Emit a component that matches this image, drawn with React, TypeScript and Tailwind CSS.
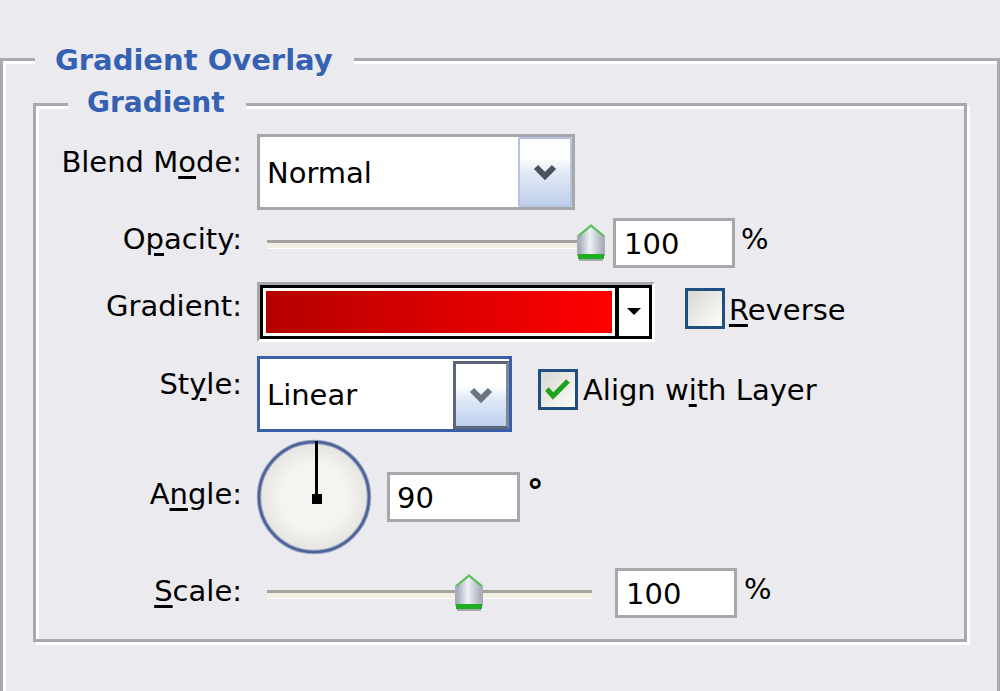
import clsx from "clsx";
import type { ReactNode } from "react";

function Label({ className, children }: { className?: string; children: ReactNode }) {
  return <div className={clsx("w-[206px] shrink-0 text-right", className)}>{children}</div>;
}

function Mn({ children }: { children: ReactNode }) {
  return <span className="underline decoration-[3px] underline-offset-[4px]">{children}</span>;
}

function Chevron({ color }: { color: string }) {
  return (
    <svg width="24" height="16" viewBox="0 0 24 16">
      <path d="M3 3 L12 12 L21 3" fill="none" stroke={color} strokeWidth="6" strokeLinejoin="miter" />
    </svg>
  );
}

function Thumb({ id }: { id: string }) {
  return (
    <svg width="30" height="38" viewBox="0 0 30 38">
      <defs>
        <linearGradient id={id} x1="0" x2="1" y1="0" y2="0">
          <stop offset="0" stopColor="#9ca2b2" />
          <stop offset="0.45" stopColor="#f0f1f6" />
          <stop offset="1" stopColor="#a3a8b7" />
        </linearGradient>
      </defs>
      <path d="M2 12 L15 1.5 L28 12 V31 H2 Z" fill={`url(#${id})`} stroke="#a8adb9" strokeWidth="2" />
      <path d="M2.5 12 L15 1.5 L27.5 12" fill="none" stroke="#55c455" strokeWidth="2" />
      <rect x="2" y="30" width="26" height="5" fill="#1fae1f" />
      <rect x="3" y="35" width="24" height="2" fill="#a4a9b0" />
    </svg>
  );
}

function Slider({ width, thumbLeft, id }: { width: string; thumbLeft: number; id: string }) {
  return (
    <div className={clsx("relative h-[38px] shrink-0", width)}>
      <div className="absolute left-[10px] top-[16px] w-[325px]">
        <div className="h-[3px] bg-[#a3a29d]" />
        <div className="h-[5px] bg-[#f1efe3]" />
        <div className="h-[1px] bg-white" />
      </div>
      <div className="absolute top-0" style={{ left: thumbLeft }}>
        <Thumb id={id} />
      </div>
    </div>
  );
}

function NumBox({ value, className }: { value: string; className?: string }) {
  return (
    <div className={clsx("flex h-[50px] shrink-0 items-center border-[3px] border-[#a8a7ac] bg-white pt-[2px]", className)}>
      {value}
    </div>
  );
}

function Check({ checked }: { checked?: boolean }) {
  return (
    <div className="h-[41px] w-[40px] shrink-0 border-[3px] border-[#1f4f80] bg-linear-to-br from-[#d8d7d1] to-[#fdfdfc]">
      {checked && (
        <svg width="34" height="35" viewBox="0 0 34 35">
          <path d="M6 17 L12 24 L27 9" fill="none" stroke="#1fa31f" strokeWidth="5" />
        </svg>
      )}
    </div>
  );
}

function Dial() {
  return (
    <svg width="116" height="116" viewBox="0 0 116 116" className="-ml-[1px] shrink-0">
      <defs>
        <radialGradient id="dialfill" cx="0.5" cy="0.5" r="0.5">
          <stop offset="0.6" stopColor="#f5f4f1" />
          <stop offset="1" stopColor="#e4e3df" />
        </radialGradient>
      </defs>
      <circle cx="58" cy="58" r="55" fill="url(#dialfill)" stroke="#9aa8c6" strokeWidth="4.5" />
      <circle cx="58" cy="58" r="55" fill="none" stroke="#4d6296" strokeWidth="2.5" />
      <rect x="59" y="2" width="3" height="58" fill="#000" />
      <rect x="56" y="55" width="10" height="10" fill="#000" />
    </svg>
  );
}

export default function App() {
  return (
    <div className="h-[691px] w-[1000px] overflow-hidden bg-[#ebeaef] font-['DejaVu_Sans',sans-serif] text-[29px] leading-[34px] text-black">
      <div className="mt-[58px] h-[700px] w-[1000px] border-[3px] border-[#a9a8ad] shadow-[3px_3px_0_0_#fff,inset_3px_3px_0_0_#fff]">
        <div className="-mt-[17px] ml-[32px] w-fit bg-[#ebeaef] pl-[20px] pr-[21px] text-[29px] font-bold leading-[32px] text-[#3461b1]">
          Gradient Overlay
        </div>

        <div className="ml-[30px] mt-[27px] h-[539px] w-[934px] border-[3px] border-[#a9a8ad] shadow-[3px_3px_0_0_#fff,inset_3px_3px_0_0_#fff]">
          <div className="-mt-[19px] ml-[32px] w-fit bg-[#ebeaef] pl-[19px] pr-[21px] text-[28px] font-bold leading-[32px] text-[#3461b1]">
            Gradient
          </div>

          {/* Blend Mode */}
          <div className="mt-[15px] flex h-[76px] items-start">
            <Label className="mt-[11px]">
              Blend M<Mn>o</Mn>de:
            </Label>
            <div className="ml-[15px] flex h-[76px] w-[318px] border-[3px] border-[#a8a7ac] bg-white">
              <div className="flex flex-1 items-center pl-[7px] pt-[2px]">Normal</div>
              <div className="flex h-full w-[54px] items-center justify-center rounded-[2px] border-[2px] border-[#b5c4de] bg-linear-to-b from-[#fcfdfe] from-30% via-[#e4ebf6] to-[#bfcfe9]">
                <Chevron color="#4b5362" />
              </div>
            </div>
          </div>

          {/* Opacity */}
          <div className="mt-[8px] flex h-[50px] items-start">
            <Label className="mt-[4px]">
              O<Mn>p</Mn>acity:
            </Label>
            <div className="ml-[15px] flex items-start">
              <Slider width="w-[356px] mt-[6px]" thumbLeft={319} id="th1" />
              <NumBox value="100" className="w-[122px] pl-[8px]" />
              <div className="ml-[6px] mt-[4px]">%</div>
            </div>
          </div>

          {/* Gradient */}
          <div className="mt-[14px] flex h-[60px] items-start">
            <Label className="mt-[7px]">Gradient:</Label>
            <div className="ml-[15px] flex items-start">
              <div className="h-[60px] w-[398px] border-[3px] border-b-white border-l-[#a7a6aa] border-r-white border-t-[#a7a6aa]">
                <div className="flex h-full border-[3px] border-black bg-white">
                  <div className="w-[352px] p-[3px]">
                    <div className="h-full bg-linear-to-r from-[#b50000] to-[#ff0000]" />
                  </div>
                  <div className="w-[4px] bg-black" />
                  <div className="flex flex-1 items-center justify-center">
                    <svg width="14" height="8" viewBox="0 0 14 8">
                      <path d="M0 0 H14 L7 7 Z" fill="#000" />
                    </svg>
                  </div>
                </div>
              </div>
              <div className="ml-[30px] mt-[6px]">
                <Check />
              </div>
              <div className="ml-[4px] mt-[11px]">
                <Mn>R</Mn>everse
              </div>
            </div>
          </div>

          {/* Style */}
          <div className="mt-[14px] flex h-[76px] items-start">
            <Label className="mt-[11px]">
              St<Mn>y</Mn>le:
            </Label>
            <div className="ml-[15px] flex items-start">
              <div className="flex h-[76px] w-[255px] border-[3px] border-[#3b5fa6] bg-white">
                <div className="flex flex-1 items-center pl-[7px] pt-[2px]">Linear</div>
                <div className="mt-[2px] flex h-[68px] w-[56px] items-center justify-center border-[3px] border-[#5b6779] border-r-[#7d8899] bg-linear-to-b from-white from-35% via-[#e3ebf7] via-55% to-[#bccfee]">
                  <Chevron color="#6b7685" />
                </div>
              </div>
              <div className="ml-[26px] mt-[13px]">
                <Check checked />
              </div>
              <div className="ml-[5px] mt-[17px]">
                Align w<Mn>i</Mn>th Layer
              </div>
            </div>
          </div>

          {/* Angle */}
          <div className="mt-[7px] flex h-[115px] items-start">
            <Label className="mt-[38px]">
              A<Mn>n</Mn>gle:
            </Label>
            <div className="ml-[15px] flex items-start">
              <Dial />
              <NumBox value="90" className="ml-[15px] mt-[33px] w-[133px] pl-[7px]" />
              <div className="ml-[7px] mt-[36px] text-[33px] font-bold">°</div>
            </div>
          </div>

          {/* Scale */}
          <div className="mt-[14px] flex h-[50px] items-start">
            <Label className="mt-[6px]">
              <Mn>S</Mn>cale:
            </Label>
            <div className="ml-[15px] flex items-start">
              <Slider width="w-[358px] mt-[6px]" thumbLeft={197} id="th2" />
              <NumBox value="100" className="w-[122px] pl-[8px]" />
              <div className="ml-[7px] mt-[4px]">%</div>
            </div>
          </div>
        </div>
      </div>
    </div>
  );
}
